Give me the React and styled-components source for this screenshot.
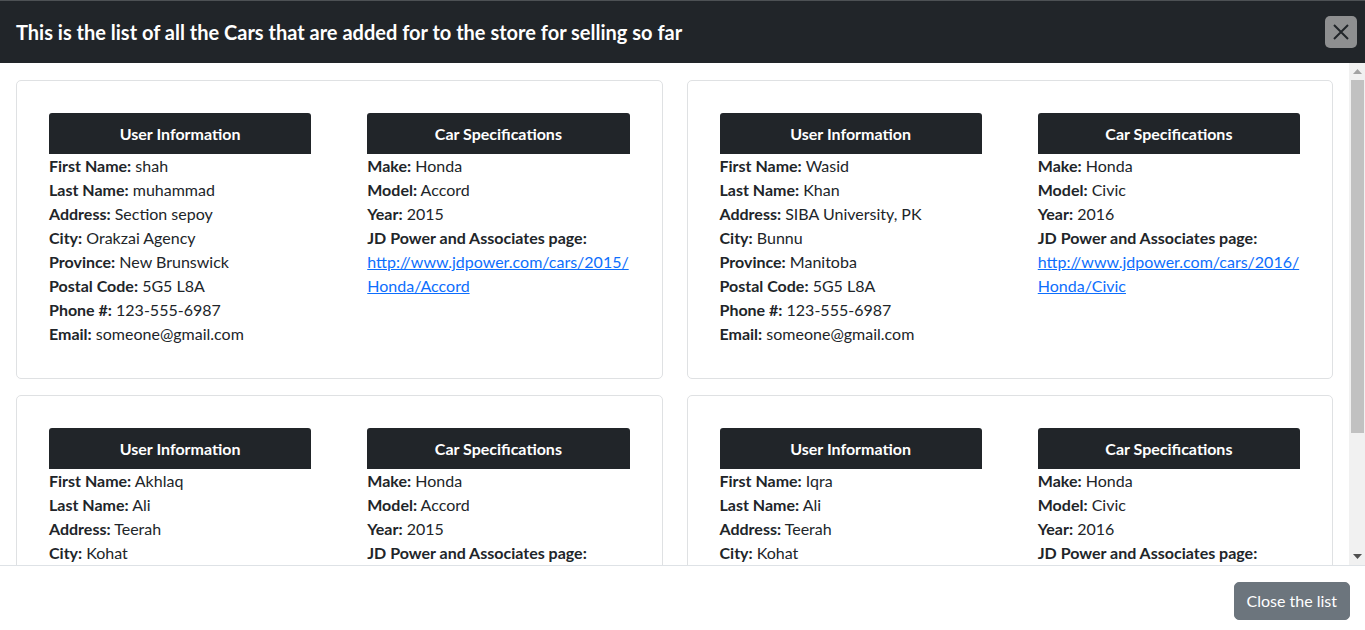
import React from 'react';
import styled, { createGlobalStyle } from 'styled-components';

const GlobalStyle = createGlobalStyle`
  html, body {
    margin: 0;
    padding: 0;
    height: 100%;
  }
  body {
    font-family: Lato, "Liberation Sans", sans-serif;
    font-size: 16px;
    color: #212529;
    background: #fff;
  }
  * { box-sizing: border-box; }
`;

// list of cars
const cars = [
  {
    first: 'shah', last: 'muhammad', address: 'Section sepoy', city: 'Orakzai Agency',
    province: 'New Brunswick', postal: '5G5 L8A', phone: '123-555-6987', email: 'someone@gmail.com',
    make: 'Honda', model: 'Accord', year: 2015,
  },
  {
    first: 'Wasid', last: 'Khan', address: 'SIBA University, PK', city: 'Bunnu',
    province: 'Manitoba', postal: '5G5 L8A', phone: '123-555-6987', email: 'someone@gmail.com',
    make: 'Honda', model: 'Civic', year: 2016,
  },
  {
    first: 'Akhlaq', last: 'Ali', address: 'Teerah', city: 'Kohat',
    province: 'Ontario', postal: '5G5 L8A', phone: '123-555-6987', email: 'someone@gmail.com',
    make: 'Honda', model: 'Accord', year: 2015,
  },
  {
    first: 'Iqra', last: 'Ali', address: 'Teerah', city: 'Kohat',
    province: 'Ontario', postal: '5G5 L8A', phone: '123-555-6987', email: 'someone@gmail.com',
    make: 'Honda', model: 'Civic', year: 2016,
  },
];

const App = () => {
  return (
    <>
      <GlobalStyle />
      <Modal>
        <Header>
          <Title>This is the list of all the Cars that are added for to the store for selling so far</Title>
          <CloseButton aria-label="Close">
            <svg width="20" height="20" viewBox="0 0 20 20">
              <path d="M3 3 L17 17 M17 3 L3 17" stroke="#212529" strokeWidth="2" fill="none" />
            </svg>
          </CloseButton>
        </Header>
        <BodyRow>
          <Body>
            <CardGrid>
              {cars.map((car, idx) => (
                <Card key={idx}>
                  <Column>
                    <SectionHead>User Information</SectionHead>
                    <Field><b>First Name:</b> {car.first}</Field>
                    <Field><b>Last Name:</b> {car.last}</Field>
                    <Field><b>Address:</b> {car.address}</Field>
                    <Field><b>City:</b> {car.city}</Field>
                    <Field><b>Province:</b> {car.province}</Field>
                    <Field><b>Postal Code:</b> {car.postal}</Field>
                    <Field><b>Phone #:</b> {car.phone}</Field>
                    <Field><b>Email:</b> {car.email}</Field>
                  </Column>
                  <Column>
                    <SectionHead>Car Specifications</SectionHead>
                    <Field><b>Make:</b> {car.make}</Field>
                    <Field><b>Model:</b> {car.model}</Field>
                    <Field><b>Year:</b> {car.year}</Field>
                    <Field><b>JD Power and Associates page:</b></Field>
                    <Field>
                      <LinkText href="#">
                        {`http://www.jdpower.com/cars/${car.year}/`}<wbr />{`${car.make}/${car.model}`}
                      </LinkText>
                    </Field>
                  </Column>
                </Card>
              ))}
            </CardGrid>
          </Body>
          <ScrollBar>
            <ScrollArrow>
              <svg width="9" height="5" viewBox="0 0 9 5"><path d="M0 5 L4.5 0 L9 5 Z" fill="#a3a3a3" /></svg>
            </ScrollArrow>
            <ScrollTrack>
              <ScrollThumb />
            </ScrollTrack>
            <ScrollArrow>
              <svg width="9" height="5" viewBox="0 0 9 5"><path d="M0 0 L4.5 5 L9 0 Z" fill="#505050" /></svg>
            </ScrollArrow>
          </ScrollBar>
        </BodyRow>
        <Footer>
          <FooterButton>Close the list</FooterButton>
        </Footer>
      </Modal>
    </>
  );
};

export default App;

const Modal = styled.div`
  display: flex;
  flex-direction: column;
  height: 100vh;
  background: #fff;
`;

const Header = styled.div`
  display: flex;
  align-items: center;
  justify-content: space-between;
  background: #212529;
  color: #fff;
  border-top: 1px solid #4d5154;
  padding: 16px 8px 16px 16px;
  height: 63px;
  flex-shrink: 0;
`;

const Title = styled.h5`
  margin: 0;
  font-size: 20px;
  font-weight: 700;
  line-height: 30px;
`;

const CloseButton = styled.button`
  width: 32px;
  height: 32px;
  display: flex;
  align-items: center;
  justify-content: center;
  padding: 0;
  border: none;
  border-radius: 5px;
  background: #8e8f90;
  cursor: pointer;
`;

const BodyRow = styled.div`
  flex: 1;
  min-height: 0;
  display: flex;
`;

const Body = styled.div`
  flex: 1;
  min-width: 0;
  overflow: hidden;
  padding: 17px 16px 16px 16px;
`;

const ScrollBar = styled.div`
  width: 16px;
  flex-shrink: 0;
  display: flex;
  flex-direction: column;
  background: #f1f1f1;
`;

const ScrollArrow = styled.div`
  height: 17px;
  display: flex;
  align-items: center;
  justify-content: center;
  flex-shrink: 0;
`;

const ScrollTrack = styled.div`
  flex: 1;
  padding: 0 1px 0 2px;
`;

const ScrollThumb = styled.div`
  height: 353px;
  background: #c1c1c1;
`;

const CardGrid = styled.div`
  display: grid;
  grid-template-columns: 1fr 1fr;
  column-gap: 24px;
  row-gap: 16px;
`;

const Card = styled.div`
  display: grid;
  grid-template-columns: 1fr 1fr;
  column-gap: 56px;
  border: 1px solid #dfe1e3;
  border-radius: 5px;
  padding: 32px;
`;

const Column = styled.div`
  display: flex;
  flex-direction: column;
  min-width: 0;
`;

const SectionHead = styled.div`
  background: #212529;
  color: #fff;
  font-weight: 700;
  text-align: center;
  height: 41px;
  line-height: 41px;
  border-radius: 3px 3px 0 0;
`;

const Field = styled.div`
  line-height: 24px;
  overflow-wrap: break-word;

  b {
    font-weight: 700;
  }
`;

const LinkText = styled.a`
  color: #0d6efd;
  text-decoration: underline;
`;

const Footer = styled.div`
  display: flex;
  justify-content: flex-end;
  border-top: 1px solid #dee2e6;
  padding: 16px 15px 10px;
  flex-shrink: 0;
`;

const FooterButton = styled.button`
  font-family: inherit;
  font-size: 16px;
  line-height: 24px;
  color: #fff;
  background: #6c757d;
  border: 1px solid #6c757d;
  border-radius: 5px;
  padding: 6px 12px;
  cursor: pointer;
`;
